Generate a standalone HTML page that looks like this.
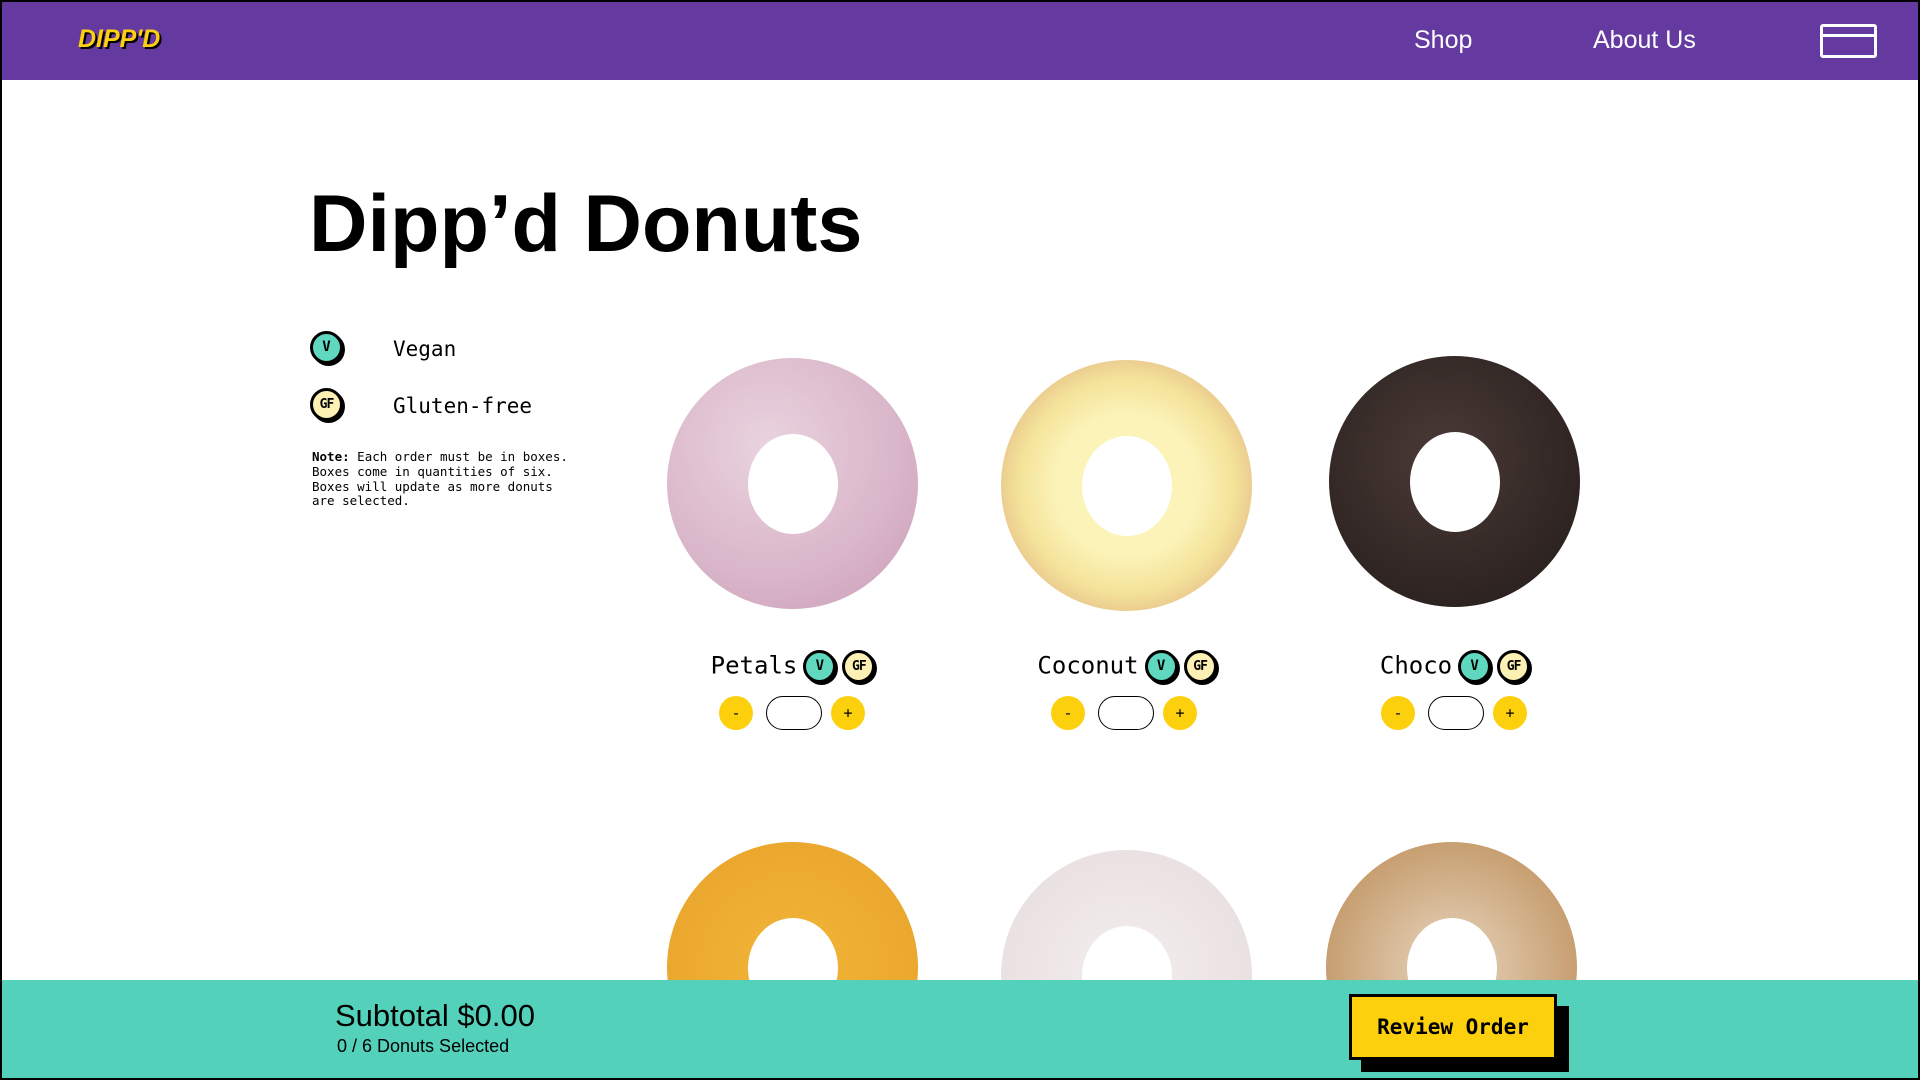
<!DOCTYPE html>
<html><head><meta charset="utf-8"><style>
*{margin:0;padding:0;box-sizing:border-box}
html,body{width:1920px;height:1080px;overflow:hidden}
body{background:#fff;position:relative;font-family:"Liberation Sans",sans-serif}
.frame{position:absolute;inset:0;border:2px solid #000;pointer-events:none;z-index:10}
nav{position:absolute;left:0;top:0;width:1920px;height:80px;background:#653aa0}
.logo{position:absolute;left:78px;top:25px;font:italic bold 25px "Liberation Sans",sans-serif;color:#fdd00d;letter-spacing:0;text-shadow:2px 2px 0 #000}
.nl{position:absolute;top:26px;color:#fff;font-size:25px}
.box{position:absolute;left:1820px;top:24px;width:57px;height:34px;border:3px solid #fff;border-radius:3px}
.box:after{content:"";position:absolute;left:-3px;right:-3px;top:7px;height:3px;background:#fff}
h1{position:absolute;left:309px;top:178px;font-size:81px;font-weight:bold;color:#000;letter-spacing:0}
.mono{font-family:"DejaVu Sans Mono","Liberation Mono",monospace}
.badge{display:inline-block;width:33px;height:33px;border-radius:50%;border:3px solid #000;box-shadow:2px 2px 0 #000;text-align:center;font:bold 14px/27px "DejaVu Sans Mono",monospace;color:#000;vertical-align:middle}
.v{background:#5fd8bf}.gf{background:#fdf0b4;font-size:13px;letter-spacing:-1px}
.leg{position:absolute;left:310px;font-size:21px}
.leg span.t{position:absolute;left:83px;top:6px;white-space:nowrap}
.note{position:absolute;left:312px;top:450px;font-size:12.5px;line-height:14.8px;white-space:pre}
.donut{position:absolute;width:251px;height:251px;border-radius:50%}
.donut:after{content:"";position:absolute;left:50%;top:50%;width:90px;height:100px;margin:-50px 0 0 -45px;background:#fff;border-radius:50%}
.name{position:absolute;top:650px;width:300px;text-align:center;font-size:24px;white-space:nowrap}
.name .badge{margin-left:6px}
.ctl{position:absolute;top:696px;height:36px}
.btn{position:absolute;width:34px;height:34px;border-radius:50%;background:#fdd00d;text-align:center;font:15px/34px "DejaVu Sans Mono",monospace}
.inp{position:absolute;width:56px;height:34px;border:1.5px solid #000;border-radius:17px}
footer{position:absolute;left:0;top:980px;width:1920px;height:100px;background:#54d1bb;z-index:5}
.sub{position:absolute;left:335px;top:998px;font-size:31px;z-index:6}
.sel{position:absolute;left:337px;top:1036px;font-size:18px;z-index:6}
.rev{position:absolute;z-index:6;left:1349px;top:994px;width:208px;height:66px;background:#fdd00d;border:3px solid #000;box-shadow:12px 12px 0 #000;text-align:center;font:bold 21px/60px "DejaVu Sans Mono",monospace}
</style></head><body>
<nav><div class="logo">DIPP'D</div><div class="nl" style="left:1414px">Shop</div><div class="nl" style="left:1593px">About Us</div><div class="box"></div></nav>
<h1>Dipp’d Donuts</h1>
<div class="leg mono" style="top:331px"><span class="badge v">V</span><span class="t">Vegan</span></div>
<div class="leg mono" style="top:388px"><span class="badge gf">GF</span><span class="t">Gluten-free</span></div>
<div class="note mono"><b>Note:</b> Each order must be in boxes.
Boxes come in quantities of six.
Boxes will update as more donuts
are selected.</div>

<div class="donut" style="left:667px;top:358px;background:radial-gradient(circle at 40% 35%,#e9d3de,#d9b5c9 60%,#c99bb6);"></div>
<div class="donut" style="left:1001px;top:360px;background:radial-gradient(circle,#fbf3b8 40%,#f4e39a 60%,#e8c58c 75%,#f0d8b0);"></div>
<div class="donut" style="left:1329px;top:356px;background:radial-gradient(circle at 45% 40%,#4a3a36,#2e2422 70%,#241c1a);"></div>

<div class="donut" style="left:667px;top:842px;background:radial-gradient(circle,#f2b53a,#e8a22a);"></div>
<div class="donut" style="left:1001px;top:850px;background:radial-gradient(circle,#f4eeee,#e6dcdc);"></div>
<div class="donut" style="left:1326px;top:842px;background:radial-gradient(circle,#e8d6c0,#b98850);"></div>

<div class="name mono" style="left:643px">Petals<span class="badge v">V</span><span class="badge gf">GF</span></div>
<div class="name mono" style="left:977px">Coconut<span class="badge v">V</span><span class="badge gf">GF</span></div>
<div class="name mono" style="left:1305px">Choco<span class="badge v">V</span><span class="badge gf">GF</span></div>

<div class="ctl" style="left:719px"><div class="btn" style="left:0">-</div><div class="inp" style="left:47px"></div><div class="btn" style="left:112px">+</div></div>
<div class="ctl" style="left:1051px"><div class="btn" style="left:0">-</div><div class="inp" style="left:47px"></div><div class="btn" style="left:112px">+</div></div>
<div class="ctl" style="left:1381px"><div class="btn" style="left:0">-</div><div class="inp" style="left:47px"></div><div class="btn" style="left:112px">+</div></div>

<footer></footer>
<div class="sub">Subtotal $0.00</div>
<div class="sel">0 / 6 Donuts Selected</div>
<div class="rev">Review Order</div>
<div class="frame"></div>
</body></html>
